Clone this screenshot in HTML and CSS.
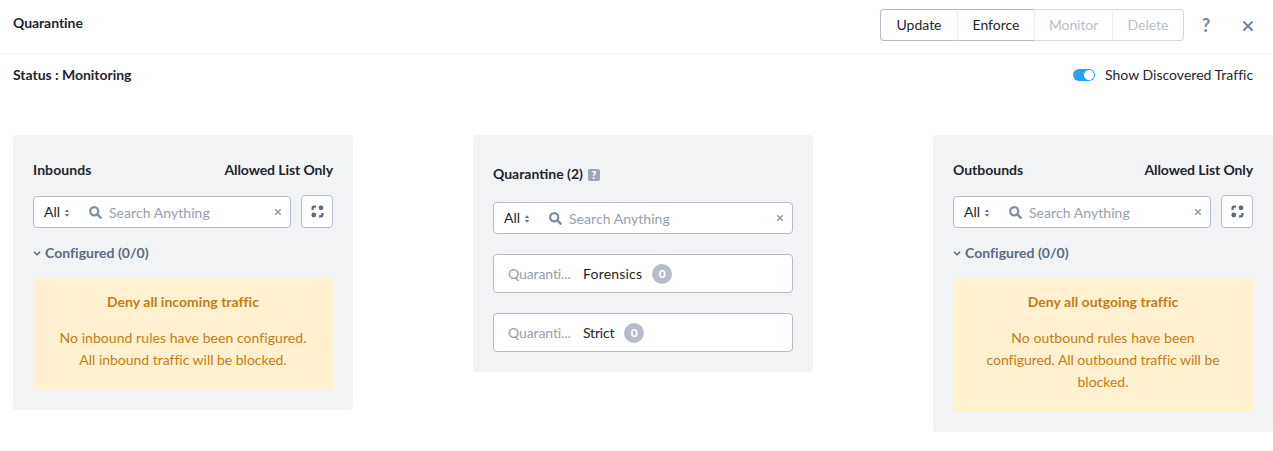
FILE: index.html
```html
<!DOCTYPE html>
<html lang="en">
<head>
<meta charset="utf-8">
<title>Quarantine</title>
<link rel="stylesheet" href="styles.css">
</head>
<body>
<svg width="0" height="0" class="defs">
  <symbol id="sort" viewBox="0 0 6 8"><path d="M.8 3 3 .2 5.200 3ZM.8 5 3 7.800 5.200 5Z" fill="#68778b"/></symbol>
  <symbol id="search" viewBox="0 0 13 13"><circle cx="5.200" cy="5.200" r="4.100" fill="none" stroke="#7d8da1" stroke-width="2.200"/><path d="m8.400 8.400 3.200 3.200" stroke="#7d8da1" stroke-width="2.500" stroke-linecap="round"/></symbol>
  <symbol id="clear" viewBox="0 0 8 8"><path d="m1.200 1.200 5.600 5.600m0-5.600L1.200 6.800" stroke="#8d99ac" stroke-width="1.500"/></symbol>
  <symbol id="chevron" viewBox="0 0 8 6"><path d="m1 1.700 3 3 3-3" fill="none" stroke="#5b6b80" stroke-width="1.600"/></symbol>
  <symbol id="expand" viewBox="0 0 13 13"><path d="M1.600 5V3q0-1.400 1.400-1.400H5M11.400 8v2q0 1.400-1.400 1.400H8" fill="none" stroke="#5b6b80" stroke-width="2.200"/><circle cx="10" cy="2.800" r="2.400" fill="#5b6b80"/><circle cx="2.800" cy="10" r="2.400" fill="#5b6b80"/></symbol>
</svg>
<header class="topbar">
  <h1 class="title">Quarantine</h1>
  <div class="actions">
    <div class="group">
      <button class="btn update">Update</button>
      <button class="btn enforce">Enforce</button>
      <button class="btn monitor" disabled>Monitor</button>
      <button class="btn delete" disabled>Delete</button>
    </div>
    <span class="help">?</span>
    <svg class="close" viewBox="0 0 12 12"><path d="m1.500 1.500 9 9m0-9-9 9" stroke="#7587a0" stroke-width="2.200"/></svg>
  </div>
</header>
<div class="status">
  <strong class="state">Status : Monitoring</strong>
  <label class="toggle"><span class="switch"></span><span class="toggle-text">Show Discovered Traffic</span></label>
</div>
<main class="columns">
  <section class="panel">
    <div class="head"><span class="in">Inbounds</span><span class="allowed">Allowed List Only</span></div>
    <div class="tools">
      <div class="search"><span class="all">All</span><svg class="sort"><use href="#sort"/></svg><svg class="glass"><use href="#search"/></svg><span class="hint">Search Anything</span><svg class="clear"><use href="#clear"/></svg></div>
      <button class="square"><svg class="expand"><use href="#expand"/></svg></button>
    </div>
    <div class="configured"><svg class="chevron"><use href="#chevron"/></svg><span>Configured (0/0)</span></div>
    <div class="notice"><strong class="deny">Deny all incoming traffic</strong><p class="copy"><span class="in1">No inbound rules have been configured.</span><br><span class="in2">All inbound traffic will be blocked.</span></p></div>
  </section>
  <section class="panel middle">
    <div class="head"><span class="quar">Quarantine (2)</span><span class="tip">?</span></div>
    <div class="tools">
      <div class="search"><span class="all">All</span><svg class="sort"><use href="#sort"/></svg><svg class="glass"><use href="#search"/></svg><span class="hint">Search Anything</span><svg class="clear"><use href="#clear"/></svg></div>
    </div>
    <div class="item"><span class="kind">Quaranti...</span><span class="forensics">Forensics</span><span class="count">0</span></div>
    <div class="item"><span class="kind">Quaranti...</span><span class="strict">Strict</span><span class="count">0</span></div>
  </section>
  <section class="panel">
    <div class="head"><span class="out">Outbounds</span><span class="allowed">Allowed List Only</span></div>
    <div class="tools">
      <div class="search"><span class="all">All</span><svg class="sort"><use href="#sort"/></svg><svg class="glass"><use href="#search"/></svg><span class="hint">Search Anything</span><svg class="clear"><use href="#clear"/></svg></div>
      <button class="square"><svg class="expand"><use href="#expand"/></svg></button>
    </div>
    <div class="configured"><svg class="chevron"><use href="#chevron"/></svg><span>Configured (0/0)</span></div>
    <div class="notice"><strong class="deny">Deny all outgoing traffic</strong><p class="copy"><span class="out1">No outbound rules have been</span><br><span class="out2">configured. All outbound traffic will be</span><br><span class="out3">blocked.</span></p></div>
  </section>
</main>
</body>
</html>
```
FILE: styles.css
```css
* { box-sizing: border-box; }
body { margin: 0; height: 451px; overflow: hidden; background: #fff; color: #1f252e; font: 14px/22px Lato, "Open Sans", sans-serif; }
.defs { display: none; }
svg { flex: none; display: block; }
button { font: inherit; color: inherit; background: #fff; padding: 0; }
.topbar { display: flex; justify-content: space-between; height: 54px; padding: 9px 19px 0 13px; border-bottom: 1px solid #f2f3f5; }
.title { margin: 3px 0 0; font-size: 14px; line-height: 22px; font-weight: 700; letter-spacing: -.06px; }
.actions { display: flex; align-items: flex-start; }
.group { display: flex; }
.btn { height: 32px; border: 1px solid #b6bccb; border-left-color: #eef0f3; border-right: 0; line-height: 30px; }
.update { width: 77px; border-left-color: #b6bccb; border-radius: 4px 0 0 4px; }
.enforce { width: 77px; }
.monitor { width: 78px; letter-spacing: -.1px; }
.delete { width: 72px; border-right: 1px solid #d6dae2; border-radius: 0 4px 4px 0; }
.btn:disabled { color: #b9c0cc; border-top-color: #d6dae2; border-bottom-color: #d6dae2; }
.help { width: 12px; margin: 5px 0 0 16px; text-align: center; font-size: 18.500px; font-weight: 700; color: #7587a0; }
.close { width: 12px; height: 12px; margin: 11px 0 0 30px; }
.status { display: flex; justify-content: space-between; padding: 10px 20px 0 13px; height: 81px; }
.state { letter-spacing: -.03px; }
.toggle { display: flex; height: 22px; align-items: center; gap: 10px; }
.toggle-text { width: 148px; letter-spacing: .02px; white-space: nowrap; }
.switch { width: 22px; height: 12px; border-radius: 6px; background: radial-gradient(circle at 16px 6px, #fff 4.700px, #22a5f7 5.300px); }
.columns { display: flex; justify-content: space-between; align-items: flex-start; padding-left: 13px; }
.panel { width: 340px; padding: 24px 20px 20px; border-radius: 4px; background: #f2f3f5; }
.head { display: flex; justify-content: space-between; font-weight: 700; height: 36px; }
.in { letter-spacing: .08px; }
.allowed { letter-spacing: -.09px; }
.tools { display: flex; align-items: flex-end; justify-content: space-between; height: 33px; }
.search { display: flex; align-items: center; width: 258px; height: 32px; border: 1px solid #b6bccb; border-radius: 4px; background: #fff; padding: 0 8px 0 10px; }
.all { width: 16px; }
.sort { width: 6px; height: 8px; margin-left: 4px; margin-top: 1px; }
.glass { width: 13px; height: 13px; margin-left: 19px; }
.hint { color: #949fb1; margin: 2px 0 0 7px; letter-spacing: .06px; }
.clear { width: 8px; height: 8px; margin-left: auto; }
.square { width: 32px; height: 33px; border: 1px solid #b6bccb; border-radius: 4px; display: flex; align-items: center; justify-content: center; padding: 0 0 1px; }
.expand { width: 13px; height: 13px; }
.configured { display: flex; align-items: center; gap: 4px; margin-top: 14px; font-weight: 700; color: #5b6b80; letter-spacing: .03px; }
.chevron { width: 8px; height: 6px; }
.notice { margin-top: 14px; padding: 13px 20px 19px; background: #fff1cf; color: #c87b12; text-align: center; }
.deny { display: block; letter-spacing: .02px; }
.copy { margin: 14px 0 0; }
.in1 { letter-spacing: .06px; }
.in2 { letter-spacing: -.02px; }
.out1 { letter-spacing: .06px; }
.out2 { letter-spacing: -.05px; }
.middle { padding-top: 28px; }
.middle .head { justify-content: flex-start; align-items: flex-start; gap: 5px; height: 38px; }
.tip { width: 12px; height: 12px; margin-top: 6px; border-radius: 2px; background: #9ba6b8; color: #fff; font-size: 11px; font-weight: 900; line-height: 12px; text-align: center; }
.middle .search { width: 300px; }
.item { display: flex; align-items: center; height: 39px; margin-top: 20px; padding: 0 14px; border: 1px solid #b6bccb; border-radius: 4px; background: #fff; }
.kind { width: 75px; color: #949fb1; letter-spacing: -.1px; }
.forensics { letter-spacing: .2px; }
.strict { letter-spacing: -.2px; }
.count { width: 20px; height: 20px; margin-left: 10px; border-radius: 50%; background: #b6bccb; color: #fff; font-size: 12px; line-height: 20px; font-weight: 900; text-align: center; }
```
